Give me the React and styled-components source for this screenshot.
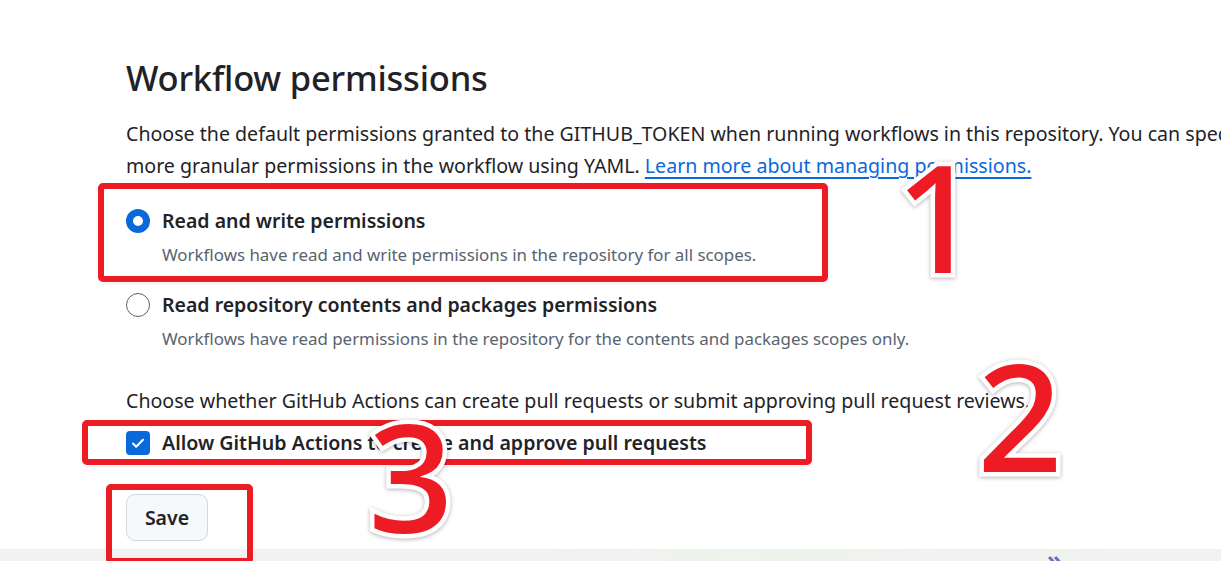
import React from 'react';
import styled, { createGlobalStyle } from 'styled-components';

const GlobalStyle = createGlobalStyle`
  html, body {
    margin: 0;
    padding: 0;
    background: #ffffff;
    overflow: hidden;
  }
  body {
    font-family: "Noto Sans", "Liberation Sans", sans-serif;
    color: #1f2328;
  }
`;

const Page = styled.div`
  position: relative;
  width: 1221px;
  height: 561px;
  overflow: hidden;
  display: flex;
  flex-direction: column;
`;

const Content = styled.div`
  flex: 1;
  padding: 52px 0 0 126px;
  display: flex;
  flex-direction: column;
`;

const Heading = styled.h2`
  margin: 0;
  font-size: 34.5px;
  line-height: 52px;
  font-weight: 500;
  letter-spacing: -0.2px;
`;

const Lead = styled.p`
  margin: 14px 0 0;
  font-size: 19.6px;
  line-height: 32px;
  white-space: nowrap;
`;

const DocLink = styled.a`
  color: #0969da;
  text-decoration: underline;
  text-underline-offset: 4px;
  text-decoration-thickness: 2px;
`;

const Options = styled.div`
  margin-top: 24px;
  display: flex;
  flex-direction: column;
  gap: 22px;
`;

const Option = styled.label`
  display: grid;
  grid-template-columns: 24px 1fr;
  column-gap: 12px;
  align-items: center;
`;

const Radio = styled.span`
  width: 24px;
  height: 24px;
  box-sizing: border-box;
  border-radius: 50%;
  background: #ffffff;
  border: ${(p) => (p.checked ? '7px solid #0969da' : '1.5px solid #59636e')};
`;

const OptionTitle = styled.span`
  font-size: 19.5px;
  line-height: 30px;
  font-weight: 600;
`;

const OptionNote = styled.span`
  grid-column: 2;
  margin-top: 5px;
  font-size: 16.9px;
  line-height: 27px;
  color: #59636e;
`;

const Question = styled.p`
  margin: 34px 0 0;
  font-size: 19.6px;
  line-height: 30px;
`;

const CheckRow = styled.label`
  margin-top: 12px;
  display: flex;
  align-items: center;
  gap: 12px;
`;

const Checkbox = styled.span`
  width: 24px;
  height: 24px;
  border-radius: 4px;
  background: #0969da;
  display: flex;
  align-items: center;
  justify-content: center;
`;

const CheckLabel = styled.span`
  font-size: 19.6px;
  line-height: 30px;
  font-weight: 600;
`;

const SaveButton = styled.button`
  margin-top: 36px;
  align-self: flex-start;
  width: 82px;
  height: 47px;
  border: 1.5px solid #d1d9e0;
  border-radius: 9px;
  background: #f6f8fa;
  color: #1f2328;
  font-family: inherit;
  font-size: 19.5px;
  font-weight: 600;
`;

const Footer = styled.div`
  height: 12px;
  background: linear-gradient(90deg, #f2f2f2 0%, #f2f2f2 40%, #eef3ec 60%, #f2f2f2 100%);
  position: relative;
`;

const FooterMark = styled.span`
  position: absolute;
  left: 1047px;
  top: -2px;
  font-size: 24px;
  line-height: 24px;
  font-weight: 700;
  color: #6f6fb5;
`;

const Marker = styled.div`
  position: absolute;
  left: ${(p) => p.x}px;
  top: ${(p) => p.y}px;
  width: ${(p) => p.w}px;
  height: ${(p) => p.h}px;
  box-sizing: border-box;
  border: 6px solid #ed1c24;
  border-radius: 5px;
  box-shadow: 0 0 0 1px rgba(255, 255, 255, 0.8), 0 1px 3px rgba(0, 0, 0, 0.15);
  pointer-events: none;
`;

const Step = styled.span`
  position: absolute;
  left: ${(p) => p.x}px;
  top: ${(p) => p.y}px;
  font-family: "Noto Sans", "Liberation Sans", sans-serif;
  font-size: 150px;
  line-height: 150px;
  font-weight: 500;
  color: #ed1c24;
  -webkit-text-stroke: 9px #ffffff;
  paint-order: stroke fill;
  filter: drop-shadow(0 1px 2px rgba(0, 0, 0, 0.3));
  pointer-events: none;
`;

function Check() {
  return (
    <svg width="16" height="16" viewBox="0 0 16 16" fill="none">
      <path d="M3 8.5l3.2 3.2L13 4.8" stroke="#ffffff" strokeWidth="2" strokeLinecap="round" strokeLinejoin="round" />
    </svg>
  );
}

const options = [
  {
    title: 'Read and write permissions',
    note: 'Workflows have read and write permissions in the repository for all scopes.',
    checked: true,
  },
  {
    title: 'Read repository contents and packages permissions',
    note: 'Workflows have read permissions in the repository for the contents and packages scopes only.',
    checked: false,
  },
];

export default function App() {
  return (
    <>
      <GlobalStyle />
      <Page>
        <Content>
          <Heading>Workflow permissions</Heading>
          <Lead>
            Choose the default permissions granted to the GITHUB_TOKEN when running workflows in this repository. You can specify
            <br />
            more granular permissions in the workflow using YAML.{' '}
            <DocLink href="#">Learn more about managing permissions.</DocLink>
          </Lead>
          <Options>
            {options.map((o) => (
              <Option key={o.title}>
                <Radio checked={o.checked} />
                <OptionTitle>{o.title}</OptionTitle>
                <OptionNote>{o.note}</OptionNote>
              </Option>
            ))}
          </Options>
          <Question>
            Choose whether GitHub Actions can create pull requests or submit approving pull request reviews.
          </Question>
          <CheckRow>
            <Checkbox>
              <Check />
            </Checkbox>
            <CheckLabel>Allow GitHub Actions to create and approve pull requests</CheckLabel>
          </CheckRow>
          <SaveButton>Save</SaveButton>
        </Content>
        <Footer>
          <FooterMark>»</FooterMark>
        </Footer>

        <Marker x={98} y={183} w={730} h={99} />
        <Marker x={82} y={420} w={730} h={45} />
        <Marker x={106} y={484} w={147} h={80} />
        <Step x={895} y={140}>1</Step>
        <Step x={977} y={339}>2</Step>
        <Step x={368} y={400}>3</Step>
      </Page>
    </>
  );
}
